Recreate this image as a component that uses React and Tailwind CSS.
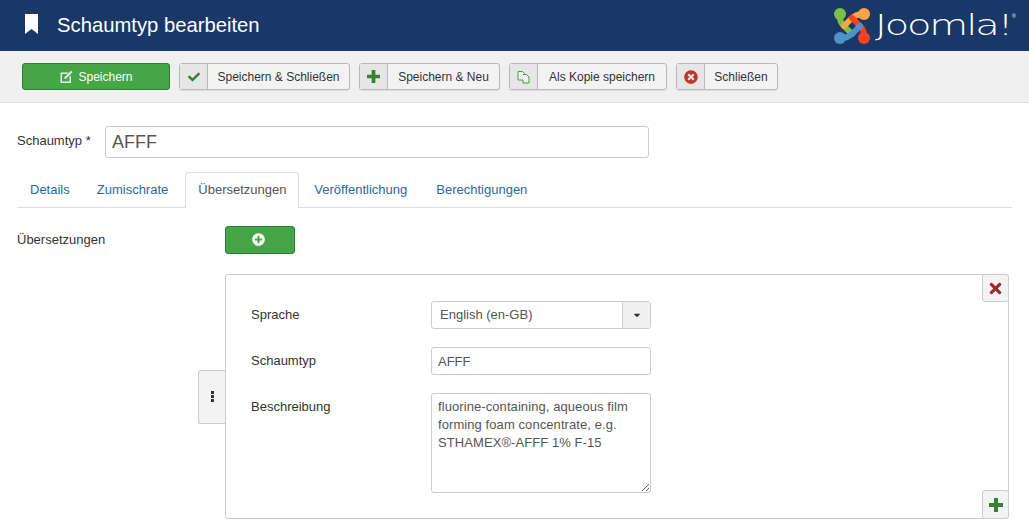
import React from "react";
import { FaCheck, FaTimes, FaTimesCircle, FaPlusCircle, FaCaretDown } from "react-icons/fa";

function Logo() {
  return (
    <svg width="38" height="38" viewBox="0 0 38 38" className="shrink-0">
      <g fill="none" strokeWidth="6" strokeLinecap="round" strokeLinejoin="round">
        <path d="M7 8 Q6 14 11 19 L19 27" stroke="#7ac143" />
        <path d="M31 8 Q25 6 19 11 L11 19" stroke="#f9a541" />
        <path d="M31 31 Q32 24 27 19 L19 11" stroke="#f44321" />
        <path d="M7 31 Q13 32 19 27 L27 19" stroke="#5091cd" />
      </g>
      <circle cx="7" cy="7" r="6" fill="#7ac143" />
      <circle cx="31" cy="7" r="6" fill="#f9a541" />
      <circle cx="7" cy="31" r="6" fill="#5091cd" />
      <circle cx="31" cy="31" r="6" fill="#f44321" />
    </svg>
  );
}

function Bookmark() {
  return (
    <svg width="13" height="20" viewBox="0 0 13 20" className="shrink-0" fill="#fff">
      <path d="M0 0h13v20l-6.500-5L0 20z" />
    </svg>
  );
}

function ThickPlus({ size, className }) {
  return (
    <svg width={size} height={size} viewBox="0 0 14 14" className={className} fill="currentColor">
      <path d="M5 0h4v5h5v4H9v5H5V9H0V5h5z" />
    </svg>
  );
}

function EditIcon() {
  return (
    <svg width="14" height="14" viewBox="0 0 14 14" className="shrink-0">
      <path d="M1.500 2.500h8L8 4H3v7.500h7.500V7L12 5.500v7.500H1.500z" fill="#e6f3e6" />
      <path d="M12 0.800 13.500 2.300 7.300 8.500 5.200 9 5.700 6.900z" fill="#e6f3e6" />
    </svg>
  );
}

function CopyIcon() {
  return (
    <svg width="13" height="14" viewBox="0 0 13 14" fill="none" stroke="#4d9a45" strokeWidth="1">
      <path d="M1 1.500h4.500l2 2V10H1z" fill="#f0f0f0" />
      <path d="M6 4.500h3.500l2.500 2.500V13H6V10" fill="#f0f0f0" />
    </svg>
  );
}

function ToolBtn({ icon, label, width }) {
  return (
    <button className={`flex h-[27px] ${width} items-stretch rounded-[3px] border border-[#b9b9b9] bg-[#f3f3f3] text-[12px] text-[#333] shadow-[0_1px_1px_rgba(0,0,0,0.08)]`}>
      <span className="flex w-[28px] items-center justify-center border-r border-[#b9b9b9] bg-[#e6e6e6]">{icon}</span>
      <span className="flex flex-1 items-center justify-center">{label}</span>
    </button>
  );
}

function Row({ label, children, className }) {
  return (
    <div className={`flex ${className}`}>
      <div className="w-[180px] shrink-0 pt-[5px] text-[13px] leading-[18px] text-[#333]">{label}</div>
      {children}
    </div>
  );
}

export default function App() {
  const tabClass = "px-[12px] pt-[9px] text-[13px] leading-[18px] text-[#2a69a0]";
  return (
    <div className="h-[530px] w-[1029px] overflow-hidden bg-white font-['Liberation_Sans',sans-serif]">
      <header className="flex h-[51px] items-center justify-between bg-[#1a3867] pl-[25px] pr-[12px]">
        <div className="flex items-center">
          <span className="mb-[4px] flex"><Bookmark /></span>
          <h1 className="ml-[19px] text-[20.25px] leading-none text-white">Schaumtyp bearbeiten</h1>
        </div>
        <div className="flex items-center">
          <Logo />
          <span className="ml-[4px] flex w-[137px] justify-start">
            <span className="origin-left scale-x-[1.43] font-['DejaVu_Sans',sans-serif] text-[28px] font-extralight leading-none tracking-[-1.5px] text-white">Joomla!</span>
          </span>
          <span className="mb-[18px] w-[5px] text-[5px] leading-none text-white">®</span>
        </div>
      </header>

      <div className="flex h-[52px] items-center gap-[9px] border-b border-[#dedede] bg-[#f0f0f0] pl-[22px]">
        <button className="flex h-[27px] w-[148px] items-center justify-center gap-[5px] rounded-[3px] border border-[#2f7d32] bg-[#46a546] text-[12px] text-white">
          <EditIcon />
          Speichern
        </button>
        <ToolBtn width="w-[171px]" label="Speichern & Schließen" icon={<FaCheck className="h-[12px] w-[12px] text-[#378137]" />} />
        <ToolBtn width="w-[141px]" label="Speichern & Neu" icon={<ThickPlus size={13} className="text-[#378137]" />} />
        <ToolBtn width="w-[158px]" label="Als Kopie speichern" icon={<CopyIcon />} />
        <ToolBtn width="w-[102px]" label="Schließen" icon={<FaTimesCircle className="h-[14px] w-[14px] text-[#bd362f]" />} />
      </div>

      <main className="px-[17px]">
        <div className="flex items-start pt-[23px]">
          <label className="w-[88px] pt-[6px] text-[13px] leading-[18px] text-[#333]">Schaumtyp *</label>
          <input readOnly value="AFFF" className="h-[32px] w-[544px] rounded-[3px] border border-[#ccc] bg-white px-[6px] font-['Liberation_Sans',sans-serif] text-[18px] text-[#555]" />
        </div>

        <nav className="mt-[14px] flex h-[36px] items-stretch border-b border-[#ddd]">
          <a className={`${tabClass} ml-px`}>Details</a>
          <a className={`${tabClass} ml-[3px]`}>Zumischrate</a>
          <a className="mb-[-1px] ml-[5px] w-[114px] rounded-t-[4px] border border-b-0 border-[#ddd] bg-white px-[12px] pt-[8px] text-[13px] leading-[18px] text-[#555]">Übersetzungen</a>
          <a className={`${tabClass} ml-[3px]`}>Veröffentlichung</a>
          <a className={`${tabClass} ml-[5px]`}>Berechtigungen</a>
        </nav>

        <div className="mt-[18px] flex">
          <div className="w-[208px] pt-[5px] text-[13px] leading-[18px] text-[#333]">Übersetzungen</div>
          <button className="flex h-[28px] w-[70px] items-center justify-center rounded-[3px] border border-[#2f7d32] bg-[#46a546] pr-[4px] text-white">
            <FaPlusCircle className="mb-[2px] h-[13px] w-[13px]" />
          </button>
        </div>

        <section className="relative ml-[208px] mt-[20px] h-[245px] w-[784px] rounded-[3px] border border-[#ccc] bg-white pl-[25px] pt-[26px]">
          <div className="absolute left-[-28px] top-[95px] flex h-[54px] w-[27px] items-center justify-center rounded-l-[3px] border border-r-0 border-[#ccc] bg-[#f3f3f3]">
            <span className="mb-[2px] flex flex-col gap-px">
              <span className="h-[3px] w-[3px] bg-[#333]" />
              <span className="h-[3px] w-[3px] bg-[#333]" />
              <span className="h-[3px] w-[3px] bg-[#333]" />
            </span>
          </div>
          <button className="absolute right-[-1px] top-[-1px] flex h-[28px] w-[27px] items-center justify-center rounded-[3px] border border-[#ccc] bg-[#f3f3f3]">
            <FaTimes className="h-[17px] w-[17px] text-[#a0292a]" />
          </button>
          <button className="absolute bottom-[-1px] right-[-1px] flex h-[29px] w-[27px] items-center justify-center rounded-[3px] border border-[#ccc] bg-[#f3f3f3]">
            <ThickPlus size={14} className="text-[#378137]" />
          </button>

          <Row label="Sprache">
            <div className="flex h-[28px] w-[220px] rounded-[3px] border border-[#ccc] text-[13px] text-[#555]">
              <span className="flex flex-1 items-center pl-[8px]">English (en-GB)</span>
              <span className="flex w-[28px] items-center justify-center border-l border-[#ccc] bg-[#f0f0f0]">
                <FaCaretDown className="h-[10px] w-[10px] text-[#333]" />
              </span>
            </div>
          </Row>
          <Row label="Schaumtyp" className="mt-[18px]">
            <input readOnly value="AFFF" className="h-[28px] w-[220px] rounded-[3px] border border-[#ccc] bg-white px-[6px] font-['Liberation_Sans',sans-serif] text-[13px] text-[#555]" />
          </Row>
          <Row label="Beschreibung" className="mt-[18px]">
            <textarea readOnly value={"fluorine-containing, aqueous film forming foam concentrate, e.g. STHAMEX®-AFFF 1% F-15"} className="h-[100px] w-[220px] rounded-[3px] border border-[#ccc] bg-white px-[6px] py-[4px] font-['Liberation_Sans',sans-serif] text-[13px] leading-[18px] tracking-[0.08px] text-[#555]" />
          </Row>
        </section>
      </main>
    </div>
  );
}
